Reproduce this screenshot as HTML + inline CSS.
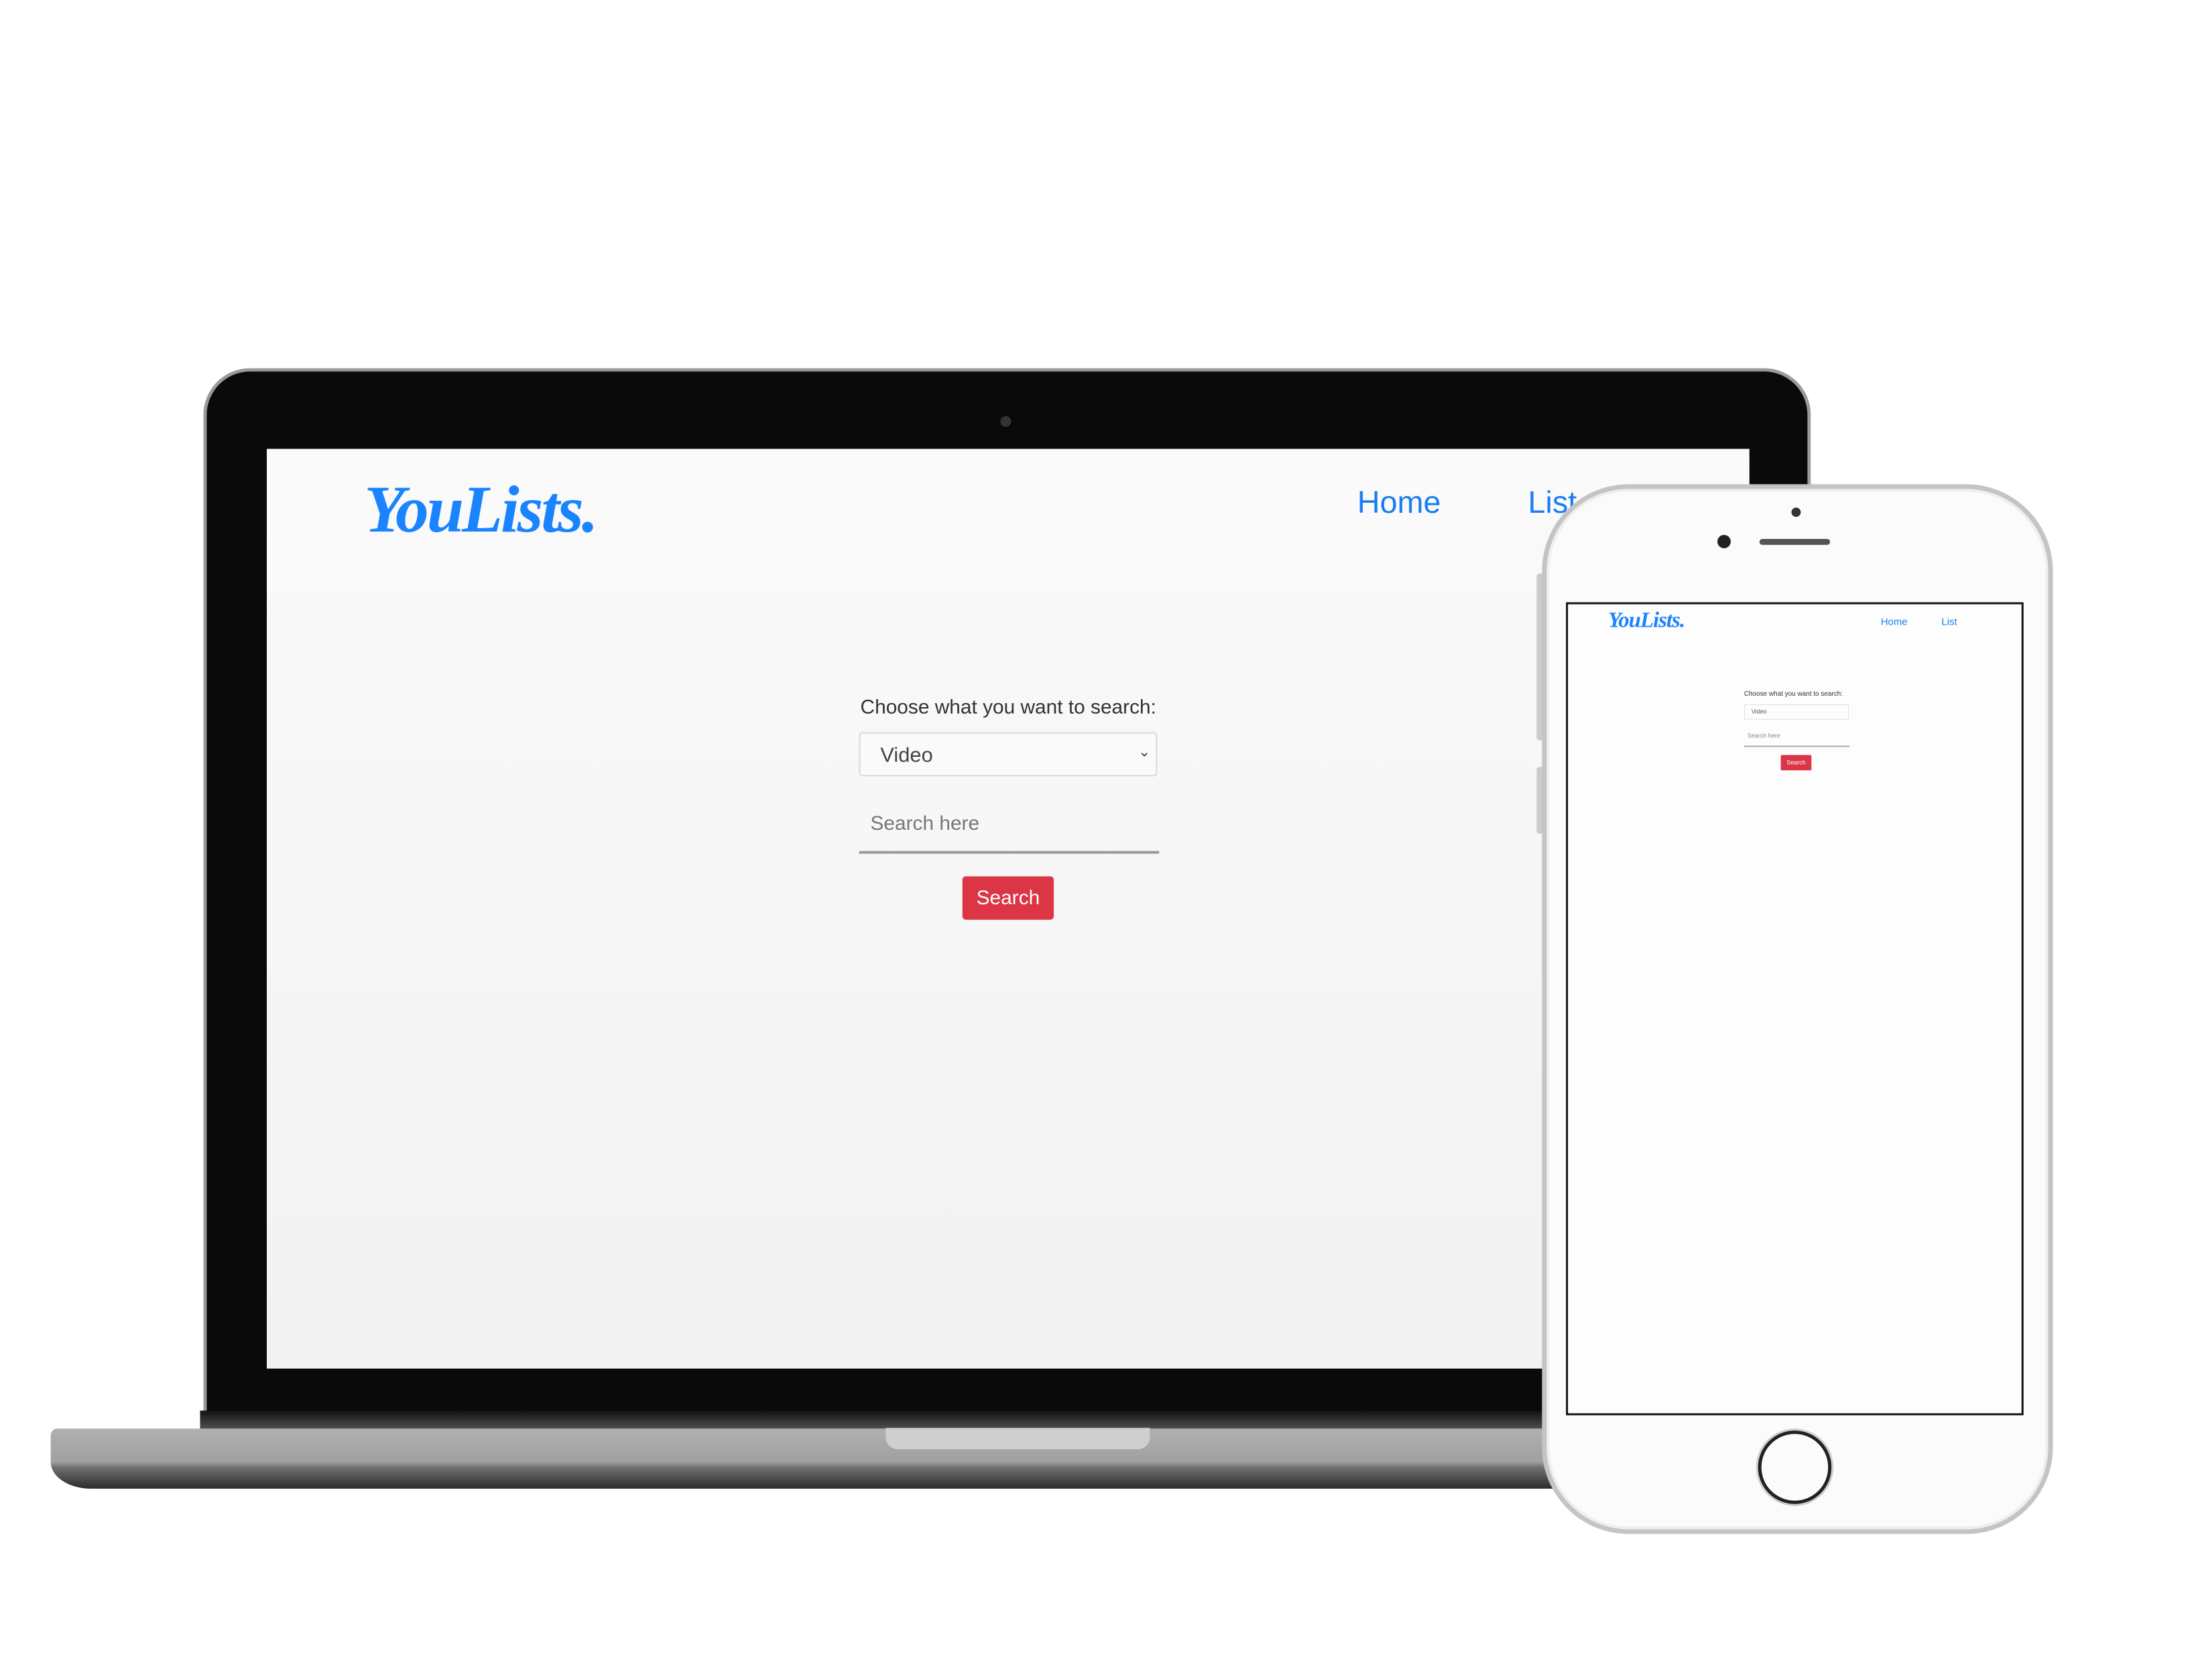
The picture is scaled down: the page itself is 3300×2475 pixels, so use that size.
<!DOCTYPE html>
<html><head><meta charset="utf-8"><style>
*{margin:0;padding:0;box-sizing:border-box}
body{width:3300px;height:2475px;background:#fff;position:relative;overflow:hidden;font-family:"Liberation Sans",sans-serif}
#w{position:absolute;left:0;top:0;width:3300px;height:2475px;transform:scale(0.995);transform-origin:0 0}
.a{position:absolute}
.logo{font-family:"Liberation Serif",serif;font-style:italic;font-weight:bold;color:#1a84ff;letter-spacing:-3px}
.nav{color:#1a7ef0}
</style></head><body><div id="w">
<!-- laptop lid -->
<div class="a" style="left:305px;top:552px;width:2410px;height:1600px;border-radius:70px 70px 0 0;background:#0a0a0a;border:5px solid #9a9a9a;border-bottom:none"></div>
<div class="a" style="left:1500px;top:624px;width:16px;height:16px;border-radius:50%;background:#333"></div>
<!-- screen -->
<div class="a" style="left:400px;top:673px;width:2223px;height:1379px;background:linear-gradient(#fafafa,#f2f2f2)"></div>
<div class="a logo" style="left:546px;top:706px;font-size:100px">YouLists.</div>
<div class="a nav" style="left:2035px;top:725px;font-size:47px">Home</div>
<div class="a nav" style="left:2291px;top:725px;font-size:47px">List</div>
<div class="a" style="left:1290px;top:1044px;font-size:30px;color:#333">Choose what you want to search:</div>
<div class="a" style="left:1288px;top:1098px;width:447px;height:66px;border:2px solid #d8d8d8;border-radius:5px;background:#fafafa;font-size:31px;color:#444;padding:14px 0 0 30px">Video<span style="position:absolute;right:8px;top:14px;font-size:22px">&#8964;</span></div>
<div class="a" style="left:1305px;top:1218px;font-size:30px;color:#777">Search here</div>
<div class="a" style="left:1288px;top:1276px;width:450px;height:4px;background:#999"></div>
<div class="a" style="left:1443px;top:1314px;width:137px;height:65px;background:#dc3545;border-radius:5px;color:#fff;font-size:30px;text-align:center;line-height:65px">Search</div>
<!-- base -->
<div class="a" style="left:300px;top:2115px;width:2420px;height:30px;background:linear-gradient(#111,#555)"></div>
<div class="a" style="left:76px;top:2142px;width:2870px;height:90px;border-radius:10px 10px 60px 60px/10px 10px 40px 40px;background:linear-gradient(#b0b0b0 0%,#a0a0a0 55%,#707070 65%,#2a2a2a 100%)"></div>
<div class="a" style="left:1328px;top:2141px;width:396px;height:32px;background:#cfcfcf;border-radius:0 0 18px 18px"></div>
<!-- phone -->
<div class="a" style="left:2304px;top:860px;width:12px;height:250px;background:#ccc;border-radius:4px"></div>
<div class="a" style="left:2304px;top:1150px;width:12px;height:100px;background:#ccc;border-radius:4px"></div>
<div class="a" style="left:2312px;top:726px;width:766px;height:1574px;border-radius:130px;background:#fbfbfb;border:7px solid #c4c4c4;box-shadow:inset 0 0 0 4px #eee"></div>
<div class="a" style="left:2686px;top:761px;width:14px;height:14px;border-radius:50%;background:#333"></div>
<div class="a" style="left:2575px;top:802px;width:20px;height:20px;border-radius:50%;background:#222"></div>
<div class="a" style="left:2638px;top:808px;width:106px;height:9px;border-radius:5px;background:#555"></div>
<div class="a" style="left:2348px;top:903px;width:686px;height:1219px;border:3px solid #111;background:#fdfdfd"></div>
<div class="a logo" style="left:2411px;top:912px;font-size:33px;letter-spacing:-1px">YouLists.</div>
<div class="a nav" style="left:2820px;top:924px;font-size:15px">Home</div>
<div class="a nav" style="left:2911px;top:924px;font-size:15px">List</div>
<div class="a" style="left:2615px;top:1035px;font-size:10px;color:#333">Choose what you want to search:</div>
<div class="a" style="left:2615px;top:1056px;width:157px;height:23px;border:1px solid #ddd;border-radius:2px;font-size:9px;color:#555;padding:5px 0 0 10px">Video</div>
<div class="a" style="left:2620px;top:1098px;font-size:9px;color:#888">Search here</div>
<div class="a" style="left:2615px;top:1118px;width:158px;height:2px;background:#aaa"></div>
<div class="a" style="left:2670px;top:1132px;width:46px;height:23px;background:#dc3545;border-radius:2px;color:#fff;font-size:9px;text-align:center;line-height:23px">Search</div>
<div class="a" style="left:2636px;top:2145px;width:110px;height:110px;border-radius:50%;border:5px solid #222;background:#fbfbfb;box-shadow:0 0 0 3px #ccc"></div>
</div></body></html>
